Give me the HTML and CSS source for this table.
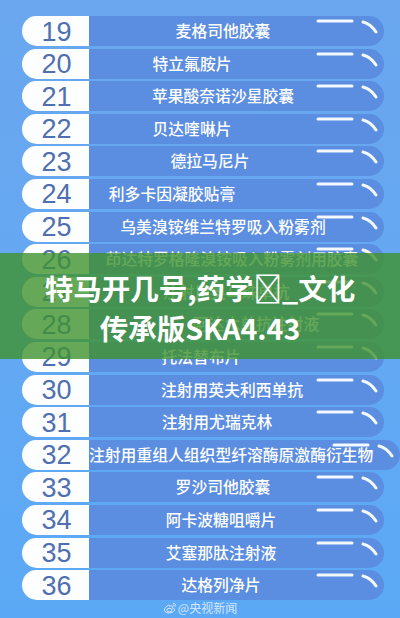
FILE: index.html
```html
<!DOCTYPE html>
<html lang="zh-CN">
<head>
<meta charset="utf-8">
<title>特马开几号,药学_文化传承版SKA4.43</title>
<link rel="stylesheet" href="styles.css">
</head>
<body>
<main class="page">
  <ol class="table">
    <li class="row"><span class="num">19</span><span class="bar"><span class="name">麦格司他胶囊</span><svg class="shine" viewBox="0 0 70 30"><path d="M4 5H38M49 6Q57 8 62 16"/></svg></span></li>
    <li class="row"><span class="num">20</span><span class="bar"><span class="name dx-31">特立氟胺片</span><svg class="shine" viewBox="0 0 70 30"><path d="M4 5H38M49 6Q57 8 62 16"/></svg></span></li>
    <li class="row"><span class="num">21</span><span class="bar"><span class="name">苹果酸奈诺沙星胶囊</span><svg class="shine" viewBox="0 0 70 30"><path d="M4 5H38M49 6Q57 8 62 16"/></svg></span></li>
    <li class="row"><span class="num">22</span><span class="bar"><span class="name dx-31">贝达喹啉片</span><svg class="shine" viewBox="0 0 70 30"><path d="M4 5H38M49 6Q57 8 62 16"/></svg></span></li>
    <li class="row"><span class="num">23</span><span class="bar"><span class="name dx-13">德拉马尼片</span><svg class="shine" viewBox="0 0 70 30"><path d="M4 5H38M49 6Q57 8 62 16"/></svg></span></li>
    <li class="row"><span class="num">24</span><span class="bar"><span class="name dx-51">利多卡因凝胶贴膏</span><svg class="shine" viewBox="0 0 70 30"><path d="M4 5H38M49 6Q57 8 62 16"/></svg></span></li>
    <li class="row"><span class="num">25</span><span class="bar"><span class="name">乌美溴铵维兰特罗吸入粉雾剂</span><svg class="shine" viewBox="0 0 70 30"><path d="M4 5H38M49 6Q57 8 62 16"/></svg></span></li>
    <li class="row"><span class="num">26</span><span class="bar"><span class="name dx-p9">茚达特罗格隆溴铵吸入粉雾剂用胶囊</span><svg class="shine" viewBox="0 0 70 30"><path d="M4 5H38M49 6Q57 8 62 16"/></svg></span></li>
    <li class="row"><span class="num">27</span><span class="bar"><span class="name dx-p3">注射用奥马珠单抗</span><svg class="shine" viewBox="0 0 70 30"><path d="M4 5H38M49 6Q57 8 62 16"/></svg></span></li>
    <li class="row"><span class="num">28</span><span class="bar"><span class="name dx-p33">阿达木单抗注射液</span><svg class="shine" viewBox="0 0 70 30"><path d="M4 5H38M49 6Q57 8 62 16"/></svg></span></li>
    <li class="row"><span class="num">29</span><span class="bar"><span class="name dx-22">托法替布片</span><svg class="shine" viewBox="0 0 70 30"><path d="M4 5H38M49 6Q57 8 62 16"/></svg></span></li>
    <li class="row"><span class="num">30</span><span class="bar"><span class="name dx-p9">注射用英夫利西单抗</span><svg class="shine" viewBox="0 0 70 30"><path d="M4 5H38M49 6Q57 8 62 16"/></svg></span></li>
    <li class="row"><span class="num">31</span><span class="bar"><span class="name dx-6">注射用尤瑞克林</span><svg class="shine" viewBox="0 0 70 30"><path d="M4 5H38M49 6Q57 8 62 16"/></svg></span></li>
    <li class="row"><span class="num">32</span><span class="bar"><span class="name">注射用重组人组织型纤溶酶原激酶衍生物</span><svg class="shine" viewBox="0 0 70 30"><path d="M4 5H38M49 6Q57 8 62 16"/></svg></span></li>
    <li class="row"><span class="num">33</span><span class="bar"><span class="name">罗沙司他胶囊</span><svg class="shine" viewBox="0 0 70 30"><path d="M4 5H38M49 6Q57 8 62 16"/></svg></span></li>
    <li class="row"><span class="num">34</span><span class="bar"><span class="name dx-2">阿卡波糖咀嚼片</span><svg class="shine" viewBox="0 0 70 30"><path d="M4 5H38M49 6Q57 8 62 16"/></svg></span></li>
    <li class="row"><span class="num">35</span><span class="bar"><span class="name dx-2">艾塞那肽注射液</span><svg class="shine" viewBox="0 0 70 30"><path d="M4 5H38M49 6Q57 8 62 16"/></svg></span></li>
    <li class="row"><span class="num">36</span><span class="bar"><span class="name dx-2">达格列净片</span><svg class="shine" viewBox="0 0 70 30"><path d="M4 5H38M49 6Q57 8 62 16"/></svg></span></li>
  </ol>
  <p class="credit"><svg class="weibo" viewBox="0 0 14 12"><path d="M5.6 3.2C3.4 4.2 1.2 6.3 1.4 8.2C1.6 10.2 4.3 11.3 7 10.9C9.8 10.5 11.8 8.9 11.6 7.3C11.4 6.2 10.1 5.9 9.3 6.1C9.8 5.2 9.9 4.2 8.9 3.9C8 3.6 6.9 4.3 6.5 4.5C6.8 3.4 6.5 2.8 5.6 3.2Z"/><ellipse cx="6.4" cy="8.1" rx="2.6" ry="1.8"/><path d="M10 1.4C11.8 1.3 13 2.8 12.6 4.5M9.9 2.9C10.9 2.9 11.4 3.6 11.2 4.4"/></svg>@央视新闻</p>
  <div class="banner">
    <h1 class="title">特马开几号,药学&#xE000;_文化<br>传承版SKA4.43</h1>
  </div>
</main>
</body>
</html>
```
FILE: styles.css
```css
html, body {
  margin: 0;
  padding: 0;
}
body {
  width: 400px;
  height: 618px;
  overflow: hidden;
  background: linear-gradient(180deg, #6aa7ef 0%, #64a8f2 50%, #5ba9f6 100%);
  font-family: "Noto Sans CJK SC", "Noto Sans", sans-serif;
}
.page {
  position: relative;
  width: 400px;
  height: 618px;
}
.table {
  list-style: none;
  margin: 0;
  padding: 16px 16px 0 22px;
  display: flex;
  flex-direction: column;
  gap: 2.6px;
}
.row {
  display: flex;
  height: 30px;
}
.num {
  flex: 0 0 67px;
  display: flex;
  align-items: center;
  justify-content: center;
  background: #fdfeff;
  border-radius: 14px 0 0 15px / 15px 0 0 15px;
  color: #4f6fb1;
  font-family: "Liberation Sans", Arial, sans-serif;
  font-size: 27px;
  line-height: 30px;
  padding-left: 2px;
  padding-top: 1px;
  box-sizing: border-box;
}
.bar {
  position: relative;
  flex: 1;
  display: block;
  background: #5b8de0;
  border-radius: 0 15px 15px 0;
  padding-right: 27px;
  text-align: center;
  white-space: nowrap;
}
.name {
  display: inline-block;
  color: #ffffff;
  font-size: 15.8px;
  font-weight: 500;
  line-height: 30px;
  position: relative;
}
.dx-31 { left: -31px; }
.dx-13 { left: -13px; }
.dx-51 { left: -51px; }
.dx-22 { left: -22px; }
.dx-6 { left: -6px; }
.dx-2 { left: -2px; }
.dx-p3 { left: 3px; }
.dx-p9 { left: 9px; }
.dx-p33 { left: 33px; }
.shine {
  position: absolute;
  right: 0;
  top: 0;
  width: 70px;
  height: 30px;
}
.shine path {
  fill: none;
  stroke: #f4f8ff;
  stroke-width: 3;
  stroke-linecap: round;
}
.credit {
  margin: 1px 0 0;
  display: flex;
  align-items: center;
  justify-content: center;
  gap: 1px;
  color: #d6e6fb;
  font-size: 12px;
  line-height: 14px;
}
.weibo {
  width: 14px;
  height: 12px;
}
.weibo path, .weibo ellipse {
  fill: none;
  stroke: #d6e6fb;
  stroke-width: 1;
}
.banner {
  position: absolute;
  left: 0;
  right: 0;
  top: 253px;
  height: 106px;
  background: rgba(62, 146, 46, 0.8);
  display: flex;
  align-items: center;
  justify-content: center;
}
.title {
  margin: 0;
  color: #ffffff;
  font-family: "Noto Sans CJK SC", "Noto Sans", sans-serif;
  font-weight: 700;
  font-size: 28.5px;
  line-height: 40px;
  text-align: center;
  padding-top: 4px;
}
```
